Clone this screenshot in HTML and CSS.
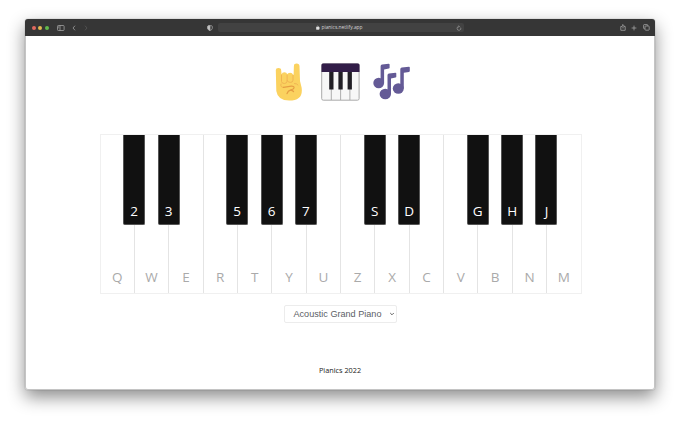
FILE: index.html
```html
<!DOCTYPE html>
<html lang="en">
<head>
<meta charset="utf-8">
<title>Pianics</title>
<link rel="stylesheet" href="styles.css">
</head>
<body>
<div class="window">
  <header class="toolbar">
    <div class="side left">
      <span class="dot red"></span><span class="dot yellow"></span><span class="dot green"></span>
      <svg class="ic sidebar" viewBox="0 0 8 6"><rect x=".5" y=".5" width="6.6" height="5" rx=".8"/><path d="M3 .5v5M1.3 1.7h.8M1.3 2.8h.8"/></svg>
      <svg class="ic back" viewBox="0 0 4 6"><path d="M3 .7 1 3l2 2.3"/></svg>
      <svg class="ic forward" viewBox="0 0 4 6"><path d="m1 .7 2 2.3-2 2.3"/></svg>
    </div>
    <div class="center">
      <svg class="ic shield" viewBox="0 0 6 6"><path d="M3 .7h1.300q1 0 1 1v1.600Q5.200 4.800 3 5.500.8 4.800.7 3.300V1.700q0-1 1-1z"/><path class="fill" d="M3 .7H1.700q-1 0-1 1v1.600Q.8 4.800 3 5.500z"/></svg>
      <div class="address">
        <span class="url"><svg class="lock" viewBox="0 0 4 5"><rect x=".3" y="2" width="3.4" height="2.7" rx=".4"/><path d="M1.1 2.2V1.3q.9-1.2 1.8 0v.9"/></svg>pianics.netlify.app</span>
        <svg class="ic reload" viewBox="0 0 6 6"><path d="M4.700 2.600A1.900 1.900 0 1 1 3 1.500M2.600.5l1 1-1 .9"/></svg>
      </div>
    </div>
    <div class="side right">
      <svg class="ic share" viewBox="0 0 6 7"><path d="M2 2.5H.8v3.8h4.4V2.5H4M3 4.4V.7M1.9 1.7 3 .6l1.1 1.1"/></svg>
      <svg class="ic plus" viewBox="0 0 6 6"><path d="M3 .6v4.8M.6 3h4.8"/></svg>
      <svg class="ic tabs" viewBox="0 0 7 7"><rect x="2" y="2" width="4.2" height="4.2" rx=".7"/><path d="M1.8 4.7H1.2q-.6 0-.6-.6V1.2q0-.6.6-.6h2.9q.6 0 .6.6v.6"/></svg>
    </div>
  </header>
  <main class="page">
    <div class="logo">
      <svg class="horns" viewBox="0 0 28 38"><path fill="#fbd25f" d="M.8 7.200Q.7 5 3.400 5t2.800 2.400l.4 4Q7 9.300 9.400 9.300t2.800 2q.5-1.600 2.900-1.600t2.900 2.100l.6.200.3-9Q19 .6 21.700.6t2.800 2.600L25 18l1.600 6.400q2 13-12.400 13.200Q2.700 37.500 1.300 28z"/><path fill="none" stroke="#f0b452" stroke-width="1" stroke-linecap="round" stroke-linejoin="round" d="M6.500 12v6.500q.3 2.100 2.900 2 2.700-.2 2.700-2.400v-6M12.200 17.500q.6 2 3.200 1.900 2.500 0 2.600-2.200v-5M6 21q-1 3.500 2.300 3.300M19.500 20.500q2.500 0 3.500 1.500"/><path fill="none" stroke="#e69e43" stroke-width="1.300" stroke-linecap="round" d="m8.500 24.400 7.700-1.200q3-.2 2.800 1.700-.3 1.500-3.200 2-3 .8-3.800 3.800M16 27.300q1.500 0 2.500 1.200"/></svg>
      <svg class="keyboard" viewBox="0 0 39 38"><rect x=".7" y=".7" width="37.400" height="36.500" rx="1.600" fill="#f7f7f7" stroke="#aaa" stroke-width="1"/><path fill="#321d48" d="M.5 9V2Q.5.5 2 .5h35Q38.500.5 38.500 2v7z"/><path stroke="#a5a5a5" stroke-width=".9" d="M10.300 9v28M19.600 9v28M28.900 9v28"/><path fill="#211f25" d="M8.200 9h4.300v17.500H8.200zM17.400 9h4.300v17.500h-4.300zM26.600 9h4.300v17.500h-4.300z"/></svg>
      <svg class="notes" viewBox="0 0 38 37"><g fill="#645a96"><ellipse cx="5.700" cy="20" rx="5.400" ry="5.200"/><ellipse cx="12.300" cy="31" rx="5.700" ry="5.300"/><ellipse cx="25.300" cy="25.500" rx="5.500" ry="5.200"/><path d="M7.600 3.300q0-1.500 1.500-1.700L15.800.7q.8 0 .8.800v3.200q0 .7-.8.900l-4.700.9V20H7.600zM14.500 12.300q0-1.500 1.500-1.700l6.500-.9q.8 0 .8.800v3.200q0 .7-.8.900l-4.500.9V31h-3.500zM27.300 6.300q0-1.500 1.500-1.700l7.200-.9q.8 0 .8.800V8q0 .7-.8.900l-5.200.9v15.700h-3.500z"/></g></svg>
    </div>
    <div class="piano">
      <div class="key">Q<span class="black">2</span></div>
      <div class="key">W<span class="black">3</span></div>
      <div class="key">E</div>
      <div class="key">R<span class="black">5</span></div>
      <div class="key">T<span class="black">6</span></div>
      <div class="key">Y<span class="black">7</span></div>
      <div class="key">U</div>
      <div class="key">Z<span class="black">S</span></div>
      <div class="key">X<span class="black">D</span></div>
      <div class="key">C</div>
      <div class="key">V<span class="black">G</span></div>
      <div class="key">B<span class="black">H</span></div>
      <div class="key">N<span class="black">J</span></div>
      <div class="key">M</div>
    </div>
    <div class="select"><span>Acoustic Grand Piano</span><svg viewBox="0 0 6 4"><path d="m1.200 1 1.800 1.800L4.800 1"/></svg></div>
    <footer class="footer">Pianics 2022</footer>
  </main>
</div>
</body>
</html>
```
FILE: styles.css
```css
* { box-sizing: border-box; }
body {
  margin: 0;
  height: 421px;
  overflow: hidden;
  padding: 19px 25px 31px;
  background: #fff;
  font-family: "Open Sans", sans-serif;
}
.window {
  height: 371px;
  display: flex;
  flex-direction: column;
  border-radius: 3px;
  overflow: hidden;
  background: #fff;
  box-shadow: inset 0 0 0 1px #c4c4c4, 0 0 1px rgba(0,0,0,.5), 0 7px 17px rgba(0,0,0,.46);
}
.toolbar {
  height: 17px;
  flex: none;
  display: flex;
  align-items: center;
  justify-content: space-between;
  background: #363636;
}
.side, .center { display: flex; align-items: center; }
.left { width: 180px; padding-left: 6.500px; }
.dot { width: 4px; height: 4px; border-radius: 50%; margin-right: 2.700px; }
.red { background: #e2695f; }
.yellow { background: #e6b94f; }
.green { background: #62bb4c; }
.ic { fill: none; stroke: #b0b0b0; stroke-width: .7; flex: none; }
.sidebar { width: 8px; height: 6px; margin-left: 5px; }
.back { width: 4px; height: 6px; margin-left: 7px; }
.forward { width: 4px; height: 6px; margin-left: 8px; stroke: #5b5b5b; }
.center { flex: 1; padding-left: 2px; }
.shield { width: 6px; height: 6px; }
.shield .fill { fill: #c8c8c8; }
.address {
  width: 246px;
  height: 9px;
  margin-left: 5px;
  display: flex;
  align-items: center;
  justify-content: center;
  position: relative;
  border-radius: 2px;
  background: #424242;
}
.url { display: flex; align-items: center; margin-right: 3px; color: #d6d6d6; font-size: 4.900px; line-height: 9px; white-space: nowrap; }
.lock { width: 3.500px; height: 5px; margin-right: 1.500px; fill: #e2e2e2; stroke: #e2e2e2; stroke-width: .5; }
.lock path { fill: none; }
.reload { position: absolute; right: 2px; top: 1.500px; width: 6px; height: 6px; stroke: #999; }
.right { padding-right: 5.500px; gap: 5.500px; }
.share { width: 6px; height: 7px; }
.plus { width: 6px; height: 6px; }
.tabs { width: 7px; height: 7px; }
.page { flex: 1; display: flex; flex-direction: column; align-items: center; }
.logo { display: flex; width: 136px; height: 38px; margin: 27px 0 0 5px; align-items: flex-start; }
.horns { width: 28px; height: 38px; }
.keyboard { width: 39px; height: 38px; margin-left: 18px; }
.notes { width: 38px; height: 37px; margin: 0 0 0 13px; }
.piano {
  display: flex;
  width: 482px;
  height: 160px;
  margin: 33px 0 0 1px;
  border: 1px solid #f0f0f0;
}
.key {
  flex: 1;
  position: relative;
  display: flex;
  align-items: flex-end;
  justify-content: center;
  padding-bottom: 7px;
  border-right: 1px solid #e4e4e4;
  color: #aaa;
  font-size: 13.500px;
  line-height: 18px;
}
.key:last-child { border-right: 0; }
.black {
  position: absolute;
  z-index: 1;
  top: 0;
  right: -11.300px;
  width: 22px;
  height: 90px;
  padding-top: 67px;
  text-align: center;
  line-height: 18px;
  color: #fff;
  background: #111;
  border: 1px solid #555;
  border-top: 0;
  border-radius: 0 0 2px 2px;
}
.select {
  width: 113px;
  height: 18px;
  margin-top: 11px;
  display: flex;
  align-items: center;
  padding: 0 1px 0 9px;
  justify-content: space-between;
  border: 1px solid #ececec;
  border-radius: 2px;
  color: #5b6065;
  font: 9.100px "Liberation Sans", sans-serif;
  white-space: nowrap;
}
.select svg { width: 6px; height: 4px; fill: none; stroke: #666; stroke-width: 1; }
.footer { margin-top: 41.500px; font-size: 7.300px; line-height: 10px; color: #222; }
```
